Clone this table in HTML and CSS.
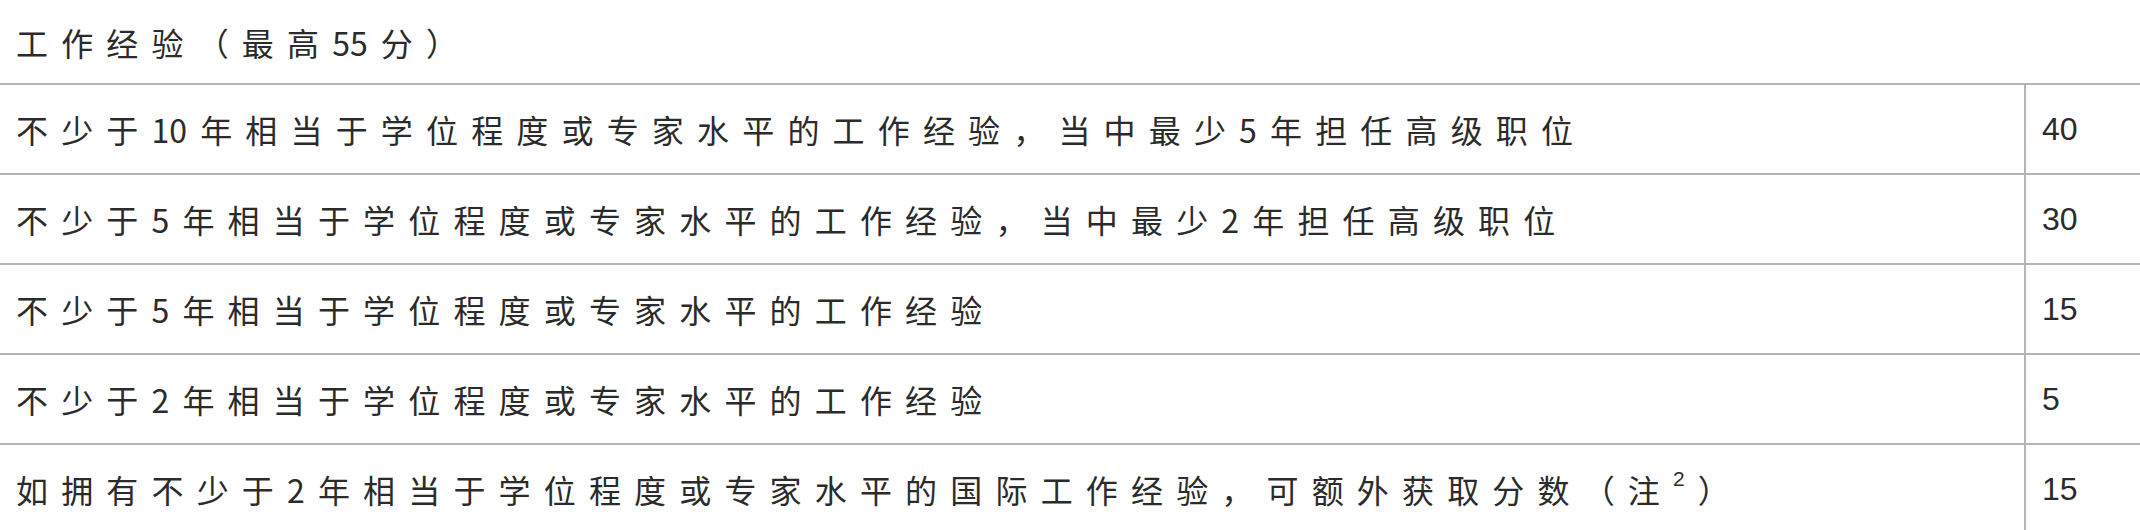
FILE: index.html
```html
<!DOCTYPE html>
<html lang="zh-Hans">
<head>
<meta charset="utf-8">
<title>工作经验</title>
<link rel="stylesheet" href="styles.css">
</head>
<body>
<table class="points">
  <colgroup>
    <col class="col-desc">
    <col class="col-score">
  </colgroup>
  <tbody>
    <tr class="head-row">
      <td class="head" colspan="2">工 作 经 验 （ 最 高 55 分 ）</td>
    </tr>
    <tr>
      <td class="desc">不 少 于 10 年 相 当 于 学 位 程 度 或 专 家 水 平 的 工 作 经 验 ， 当 中 最 少 5 年 担 任 高 级 职 位</td>
      <td class="score">40</td>
    </tr>
    <tr>
      <td class="desc">不 少 于 5 年 相 当 于 学 位 程 度 或 专 家 水 平 的 工 作 经 验 ， 当 中 最 少 2 年 担 任 高 级 职 位</td>
      <td class="score">30</td>
    </tr>
    <tr>
      <td class="desc">不 少 于 5 年 相 当 于 学 位 程 度 或 专 家 水 平 的 工 作 经 验</td>
      <td class="score">15</td>
    </tr>
    <tr>
      <td class="desc">不 少 于 2 年 相 当 于 学 位 程 度 或 专 家 水 平 的 工 作 经 验</td>
      <td class="score">5</td>
    </tr>
    <tr>
      <td class="desc">如 拥 有 不 少 于 2 年 相 当 于 学 位 程 度 或 专 家 水 平 的 国 际 工 作 经 验 ， 可 额 外 获 取 分 数 （ 注 <sup class="note">2</sup> ）</td>
      <td class="score">15</td>
    </tr>
  </tbody>
</table>
</body>
</html>
```
FILE: styles.css
```css
html, body {
  margin: 0;
  padding: 0;
  background: #ffffff;
}

.points {
  width: 100%;
  border-collapse: collapse;
  table-layout: fixed;
  color: #2b2b2b;
}

.col-score {
  width: 115px;
}

.points td {
  padding: 0 16px;
  vertical-align: middle;
  border-bottom: 2px solid #b5b5b5;
  white-space: nowrap;
  height: 88px;
}

.points .head-row td {
  height: 83px;
}

.head,
.desc {
  font-family: "Noto Sans CJK SC", "Noto Sans", sans-serif;
  font-size: 32px;
  word-spacing: 6px;
  padding-left: 17px;
}

.desc {
  border-right: 2px solid #b5b5b5;
}

.score {
  font-family: "Liberation Sans", Arial, sans-serif;
  font-size: 32px;
  padding-left: 20px;
}

.note {
  font-family: "Liberation Sans", Arial, sans-serif;
  font-size: 21px;
  vertical-align: top;
  line-height: 1;
  position: relative;
  top: 2px;
}
```
